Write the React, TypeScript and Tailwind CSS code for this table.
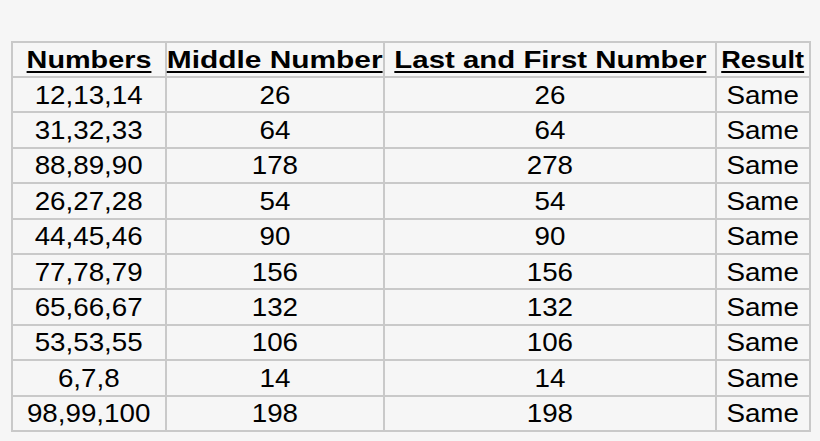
const rows: [string, string, string, string][] = [
  ['12,13,14', '26', '26', 'Same'],
  ['31,32,33', '64', '64', 'Same'],
  ['88,89,90', '178', '278', 'Same'],
  ['26,27,28', '54', '54', 'Same'],
  ['44,45,46', '90', '90', 'Same'],
  ['77,78,79', '156', '156', 'Same'],
  ['65,66,67', '132', '132', 'Same'],
  ['53,53,55', '106', '106', 'Same'],
  ['6,7,8', '14', '14', 'Same'],
  ['98,99,100', '198', '198', 'Same'],
];

// the source image is stretched sideways a little, so each header gets its own scale
const headers = [
  { label: 'Numbers', stretch: 'scale-x-[1.2]' },
  { label: 'Middle Number', stretch: 'scale-x-[1.245]' },
  { label: 'Last and First Number', stretch: 'scale-x-[1.225]' },
  { label: 'Result', stretch: 'scale-x-[1.13]' },
];

export default function App() {
  return (
    <div className="w-[820px] h-[441px] bg-[#f6f6f6] pt-[41px] pl-[11px] font-['Liberation_Sans',Arial,sans-serif] text-black">
      <table className="border-collapse table-fixed w-[798px] border-2 border-[#c9c9c9]">
        <colgroup>
          <col className="w-[154px]" />
          <col className="w-[218px]" />
          <col className="w-[332px]" />
          <col className="w-[94px]" />
        </colgroup>
        <thead>
          <tr className="h-[35px]">
            {headers.map((h) => (
              <th key={h.label} className="border-2 border-[#c9c9c9] p-0 text-center align-middle">
                <span
                  className={`inline-block ${h.stretch} text-[24px] font-bold underline underline-offset-[3px] decoration-2 whitespace-nowrap leading-none pt-[4px]`}
                >
                  {h.label}
                </span>
              </th>
            ))}
          </tr>
        </thead>
        <tbody>
          {rows.map((r, i) => (
            <tr key={i} className="h-[35.4px]">
              {r.map((c, j) => (
                <td key={j} className="border-2 border-[#c9c9c9] p-0 text-center align-middle">
                  <span className="inline-block scale-x-[1.11] text-[25px] leading-none whitespace-nowrap pt-[4px]">
                    {c}
                  </span>
                </td>
              ))}
            </tr>
          ))}
        </tbody>
      </table>
    </div>
  );
}
